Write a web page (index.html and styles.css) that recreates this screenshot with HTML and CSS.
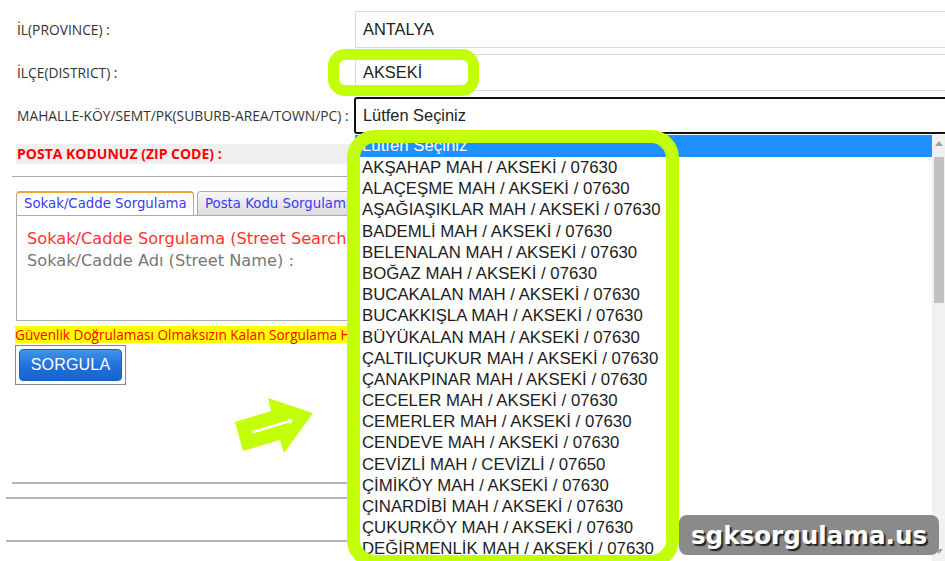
FILE: index.html
```html
<!DOCTYPE html>
<html lang="tr">
 <head>
  <meta charset="utf-8"/>
  <title>Posta Kodu Sorgulama</title>
  <link rel="stylesheet" href="styles.css">
 </head>
 <body>
	<div class="page">
		<div class="form">
			<label class="lbl">İL(PROVINCE) :</label>
			<div class="sel">ANTALYA</div>
			<label class="lbl">İLÇE(DISTRICT) :</label>
			<div class="sel">AKSEKİ</div>
			<label class="lbl">MAHALLE-KÖY/SEMT/PK(SUBURB-AREA/TOWN/PC) :</label>
			<div class="sel sel-focus">Lütfen Seçiniz</div>
		</div>
		<div class="zip">POSTA KODUNUZ (ZIP CODE) :</div>
		<div class="rule rule-top"></div>

		<div class="tabs">
			<a class="tab tab-on" href="#none">Sokak/Cadde Sorgulama</a>
			<a class="tab" href="#none">Posta Kodu Sorgulama</a>
		</div>
		<div class="panel">
			<p class="panel-title">Sokak/Cadde Sorgulama (Street Search)</p>
			<p class="panel-sub">Sokak/Cadde Adı (Street Name) :</p>
		</div>
		<div class="warn">Güvenlik Doğrulaması Olmaksızın Kalan Sorgulama Hakkınız</div>
		<div class="btn-box"><button class="btn">SORGULA</button></div>

		<div class="rule rule-a"></div>
		<div class="rule rule-b"></div>
		<div class="rule rule-c"></div>
	</div>

	<!-- açık liste -->
	<div class="drop">
		<ul class="drop-list">
			<li class="on">Lütfen Seçiniz</li>
			<li>AKŞAHAP MAH / AKSEKİ / 07630</li>
			<li>ALAÇEŞME MAH / AKSEKİ / 07630</li>
			<li>AŞAĞIAŞIKLAR MAH / AKSEKİ / 07630</li>
			<li>BADEMLİ MAH / AKSEKİ / 07630</li>
			<li>BELENALAN MAH / AKSEKİ / 07630</li>
			<li>BOĞAZ MAH / AKSEKİ / 07630</li>
			<li>BUCAKALAN MAH / AKSEKİ / 07630</li>
			<li>BUCAKKIŞLA MAH / AKSEKİ / 07630</li>
			<li>BÜYÜKALAN MAH / AKSEKİ / 07630</li>
			<li>ÇALTILIÇUKUR MAH / AKSEKİ / 07630</li>
			<li>ÇANAKPINAR MAH / AKSEKİ / 07630</li>
			<li>CECELER MAH / AKSEKİ / 07630</li>
			<li>CEMERLER MAH / AKSEKİ / 07630</li>
			<li>CENDEVE MAH / AKSEKİ / 07630</li>
			<li>CEVİZLİ MAH / CEVİZLİ / 07650</li>
			<li>ÇİMİKÖY MAH / AKSEKİ / 07630</li>
			<li>ÇINARDİBİ MAH / AKSEKİ / 07630</li>
			<li>ÇUKURKÖY MAH / AKSEKİ / 07630</li>
			<li>DEĞİRMENLİK MAH / AKSEKİ / 07630</li>
		</ul>
		<div class="scroll">
			<span class="scroll-up"></span>
			<span class="scroll-thumb"></span>
			<span class="scroll-down"></span>
		</div>
	</div>

	<!-- işaretler -->
	<div class="ring ring-small"></div>
	<div class="ring ring-big"></div>
	<svg class="arrow" width="90" height="64" viewBox="230 393 90 64">
		<polygon points="235,422 271,411 268,398 313,413 284,453 280,440 243,451" fill="#c4ff0a"/>
		<polygon points="252,431 289,420 288,418 293,420.5 290,424 289,422.5 253,433.5" fill="#fff"/>
	</svg>
	<div class="mark">sgksorgulama.us</div>
 </body>
</html>
```

FILE: styles.css
```css
*{margin:0; padding:0; box-sizing:border-box;}
html,body{width:945px; height:561px; overflow:hidden; background:#fff;}
body{font-family:"Open Sans", "Noto Sans", sans-serif; color:#333;}
li{list-style:none;}

.page{width:945px; height:561px;}

/* üst form */
.form{display:grid; grid-template-columns:338px 1fr; grid-auto-rows:37px; row-gap:6px; padding:11px 0 0 17px;}
	.lbl{font-size:13.8px; display:flex; align-items:center; color:#333; white-space:nowrap;}
	.sel{border:1px solid #dadada; border-right:none; margin-right:-10px; padding-left:7px; display:flex; align-items:center;
		font-family:"Liberation Sans", Arial, sans-serif; font-size:16.4px; color:#222;}
	.sel-focus{border:2px solid #111; border-radius:3px; margin-left:-1px; padding-left:7px;}

.zip{margin:10px 0 0 16px; width:420px; height:20px; background:#f0f0f0; color:#f00; font-weight:700; font-size:14px; line-height:20px; padding-left:1px;}

.rule{height:0; border-top:2px solid #b5b5b5;}
.rule-top{margin:12px 0 0 12px; border-top-width:1px; border-color:#a8a8a8;}

/* sekmeler */
.tabs{display:flex; margin:14px 0 0 16px; height:24px; gap:3px;}
	.tab{display:block; height:24px; padding:0 7px; font-family:"DejaVu Sans", Verdana, sans-serif; font-size:13.3px; line-height:23px;
		color:#3b3bf2; text-decoration:none; border:1px solid #aaa; border-bottom:none; border-radius:4px 4px 0 0;
		background:linear-gradient(#f7f7f7, #dcdcdc); white-space:nowrap;}
	.tab-on{background:#fff; border-top:2px solid #f0a434; line-height:22px; width:178px;}

.panel{margin-left:16px; height:106px; border:1px solid #aaa; border-right:none; padding:12px 0 0 10px;
	font-family:"DejaVu Sans", Verdana, sans-serif; font-size:16.2px; line-height:22px;}
	.panel-title{color:#f33; white-space:nowrap;}
	.panel-sub{color:#777;}

.warn{margin:5px 0 0 15px; height:17px; background:#ff0; color:#f00; font-size:13.6px; line-height:17px; white-space:nowrap;}

.btn-box{margin:2px 0 0 15px; width:111px; height:40px; border:1px solid #8a8a8a; padding:3px;}
	.btn{display:block; width:103px; height:32px; border:1px solid #1a5fc4; border-radius:4px;
		background:linear-gradient(#3f95ec, #1f6fd8 55%, #1864cf); color:#fff;
		font-family:"Liberation Sans", Arial, sans-serif; font-size:16px; letter-spacing:0.2px;}

.rule-a{margin:97px 0 0 12px;}
.rule-b{margin:13px 0 0 6px;}
.rule-c{margin:41px 0 0 6px;}

/* açık liste */
.drop{position:absolute; left:355px; top:134px; width:590px; height:430px; background:#fff; display:flex; padding-top:1px;}
	.drop-list{flex:1; font-family:"Liberation Sans", Arial, sans-serif; font-size:16.8px; color:#1c1c1c;}
		.drop-list li{height:21.2px; line-height:21.2px; padding-left:7px; white-space:nowrap;}
		.drop-list li.on{background:#1e90ff; color:#fff; height:22px;}
	.scroll{width:13px; background:#f1f1f1; position:relative;}
		.scroll-up{position:absolute; left:3px; top:6px; border:4px solid transparent; border-bottom:5px solid #a3a3a3; border-top:none;}
		.scroll-thumb{position:absolute; left:2px; top:22px; width:10px; height:146px; background:#c1c1c1;}
		.scroll-down{position:absolute; left:3px; top:414px; border:4px solid transparent; border-top:5px solid #a3a3a3; border-bottom:none;}

/* işaretler */
.ring{position:absolute; border:solid #c4ff0a;}
.ring-small{left:328px; top:49px; width:151px; height:47px; border-width:11px; border-radius:17px;}
.ring-big{left:347px; top:130px; width:332px; height:438px; border-width:13px; border-radius:28px;}
.arrow{position:absolute; left:230px; top:393px;}

.mark{position:absolute; left:679px; top:515px; width:260px; height:40px; border-radius:8px; background:#8a8a8a;
	font-family:"DejaVu Sans", Verdana, sans-serif; font-weight:700; font-size:24.6px; line-height:42px; text-align:center;
	color:#fff; text-shadow:2px 2px 1px #222;}
```
